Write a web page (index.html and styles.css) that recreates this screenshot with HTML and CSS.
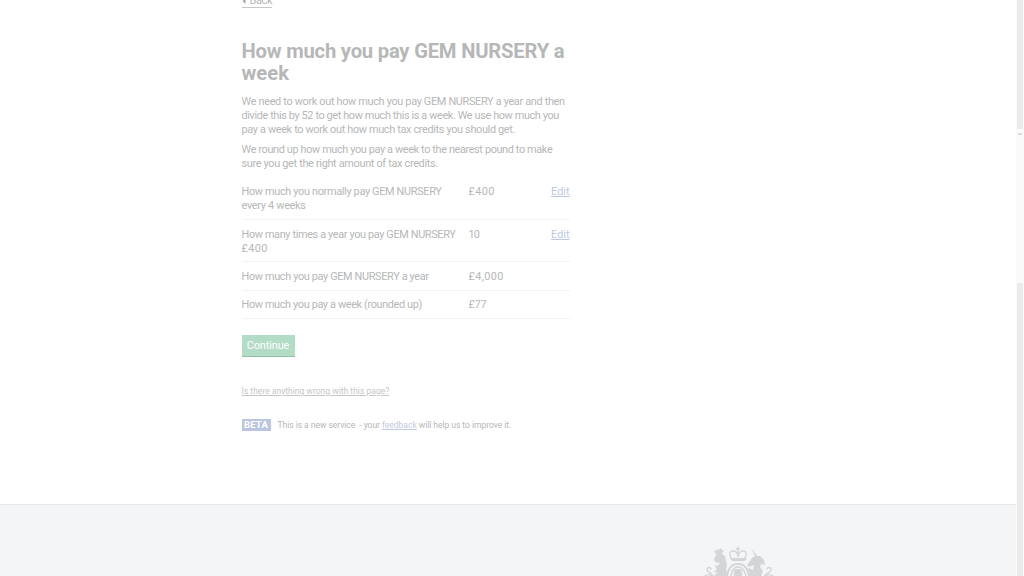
FILE: index.html
```html
<!DOCTYPE html>
<html lang="en">
<head>
<meta charset="utf-8">
<title>How much you pay GEM NURSERY a week</title>
<link rel="stylesheet" href="styles.css">
</head>
<body>
<div class="page">
  <div class="content">
    <main class="main">
      <a class="back" href="#"><svg class="back-arrow" viewBox="0 0 4 6"><path d="M3.5 0v6L0.5 3z"/></svg>Back</a>
      <h1 class="title"><span class="t1">How much you pay GEM NURSERY a</span><br>week</h1>
      <p class="text"><span class="p1">We need to work out how much you pay GEM NURSERY a year and then</span><br><span class="p2">divide this by 52 to get how much this is a week. We use how much you</span><br><span class="p3">pay a week to work out how much tax credits you should get.</span></p>
      <p class="text"><span class="p4">We round up how much you pay a week to the nearest pound to make</span><br><span class="p5">sure you get the right amount of tax credits.</span></p>
      <dl class="summary">
        <div class="row"><dt><span class="r1">How much you normally pay GEM NURSERY</span><br><span class="r5">every 4 weeks</span></dt><dd class="value">£400</dd><dd class="action"><a href="#">Edit</a></dd></div>
        <div class="row"><dt><span class="r2">How many times a year you pay GEM NURSERY</span><br><span class="value">£400</span></dt><dd class="count">10</dd><dd class="action"><a href="#">Edit</a></dd></div>
        <div class="row"><dt><span class="r3">How much you pay GEM NURSERY a year</span></dt><dd class="value">£4,000</dd></div>
        <div class="row"><dt><span class="r4">How much you pay a week (rounded up)</span></dt><dd class="short">£77</dd></div>
      </dl>
      <button class="continue">Continue</button>
      <a class="help" href="#">Is there anything wrong with this page?</a>
      <div class="phase"><strong class="tag">BETA</strong><span class="phase-text">This is a new service &nbsp;- your <a href="#">feedback</a> will help us to improve it.</span></div>
    </main>
    <footer class="footer">
      <svg class="crest" viewBox="0 0 80 32">
        <g fill="none" stroke="#d3d6d8" stroke-linecap="round">
          <path stroke-width="1.4" d="M13 32C13 28 7 28 7 24.500C7 22 11 22 11 24M12 31C9 29 7 29 5 31M64 32C65 28 71 28 71 24.500C71 22 67 22 67 24M66 31c3-2 5-2 7 0"/>
          <path stroke-width="1.4" d="M31 13Q28 6 33 6Q38 6 38 12Q39 6 43 6Q48 6 45 13M31 14h15M38 2v9M36.500 4h3"/>
          <path stroke-width="2" stroke-dasharray="2 1" d="M27 31Q29 19 38 19Q47 19 49 31"/>
          <path stroke-width="1.3" d="M31 31Q32 22 38 22Q44 22 46 31M34 26h8M34 29h8"/>
        </g>
        <g fill="#d3d6d8">
          <path d="M15 8l-1-3 2 1 1-2 2 1 2-2 1 2 2 0-2 4-5 1zM16 10l6-1 3 2 1 5 1 4-1 5 1 4-2 3H15l-1-2 4-2-4-1 3-3-3-4 3 1 3-3-5-1-1-3z"/>
          <path d="M51 3l6 8 3 0 4 4 1 5-4-1-1 3 3 4-2 6H51l-3-3 2-2-3-2 2-2 4 2 1-5-5 2-2-2 5-7 3-2z"/>
          <path d="M31 13h15l-1 3H32zM35 24h6l1 7h-8z"/>
        </g>
      </svg>
    </footer>
  </div>
  <aside class="scrollbar">
    <div class="thumb thumb-top"></div>
    <div class="track"><i class="arrow"></i></div>
    <div class="thumb thumb-bottom"></div>
  </aside>
</div>
</body>
</html>
```
FILE: styles.css
```css
* { box-sizing: border-box; }
body { margin: 0; background: #fff; overflow: hidden; }
.page { display: flex; width: 1024px; height: 576px; overflow: hidden; font: 10.9px/14px Roboto, sans-serif; color: #b6b7b7; }
.content { width: 1016px; display: flex; flex-direction: column; }
.main { width: 328px; height: 504px; margin-left: 241.5px; display: flex; flex-direction: column; align-items: flex-start; white-space: nowrap; }
.back { display: flex; align-items: center; gap: 4px; height: 13px; margin-top: -5px; border-bottom: 1px solid #c6c7c7; color: #b6b7b7; text-decoration: none; letter-spacing: -.3px; }
.back-arrow { width: 4px; height: 6px; fill: #a6a7a7; }
.title { margin: 32px 0 0; font: bold 20.2px/22px Roboto, sans-serif; }
.t1 { letter-spacing: -.2px; }
.text { margin: 11.1px 0 0; }
.text + .text { margin-top: 6px; }
.p1 { letter-spacing: -.325px; }
.p2 { letter-spacing: -.38px; }
.p3 { letter-spacing: -.34px; }
.p4 { letter-spacing: -.37px; }
.p5 { letter-spacing: -.32px; }
.r1 { letter-spacing: -.33px; }
.r2 { letter-spacing: -.36px; }
.r3 { letter-spacing: -.35px; }
.r4 { letter-spacing: -.36px; }
.r5 { letter-spacing: -.3px; }
.value { letter-spacing: .4px; }
.count { letter-spacing: -.8px; }
.short { letter-spacing: -.2px; }
.summary { width: 328px; margin: 7px 0 0; }
.row { display: grid; grid-template-columns: 227px 60px 1fr; padding: 7.4px 0 5.8px; border-bottom: 1px solid #f3f3f4; }
dt, dd { margin: 0; }
.action { text-align: right; }
a { color: #bfc8e2; }
.continue { width: 53px; height: 22px; margin: 16.4px 0 0; padding: 1px 0 0; border: 0; border-bottom: 1px solid #95bfaa; background: #b3dcc7; color: #fff; font: inherit; letter-spacing: -.1px; }
.help { margin-top: 26.6px; color: #c5c6c7; font-size: 8.55px; }
.phase { display: flex; align-items: center; margin-top: 20.6px; font-size: 8.6px; }
.phase-text { letter-spacing: -.07px; }
.tag { width: 29px; height: 12px; margin-right: 7px; background: #bcc6e2; color: #fff; font-size: 9.5px; line-height: 12px; text-align: center; letter-spacing: .2px; }
.footer { height: 72px; border-top: 1px solid #e7e8e9; background: #f4f5f6; }
.crest { display: block; width: 80px; height: 32px; margin: 40px 0 0 700px; }
.scrollbar { width: 8px; display: flex; flex-direction: column; background: #fafafa; }
.thumb { width: 6px; margin-left: 1px; background: #ebebeb; }
.thumb-top { height: 129px; }
.track { height: 154px; padding: 4px 0 0 2px; }
.arrow { display: block; width: 4px; height: 2px; background: #dcdcdc; }
.thumb-bottom { flex: 1; }
```
